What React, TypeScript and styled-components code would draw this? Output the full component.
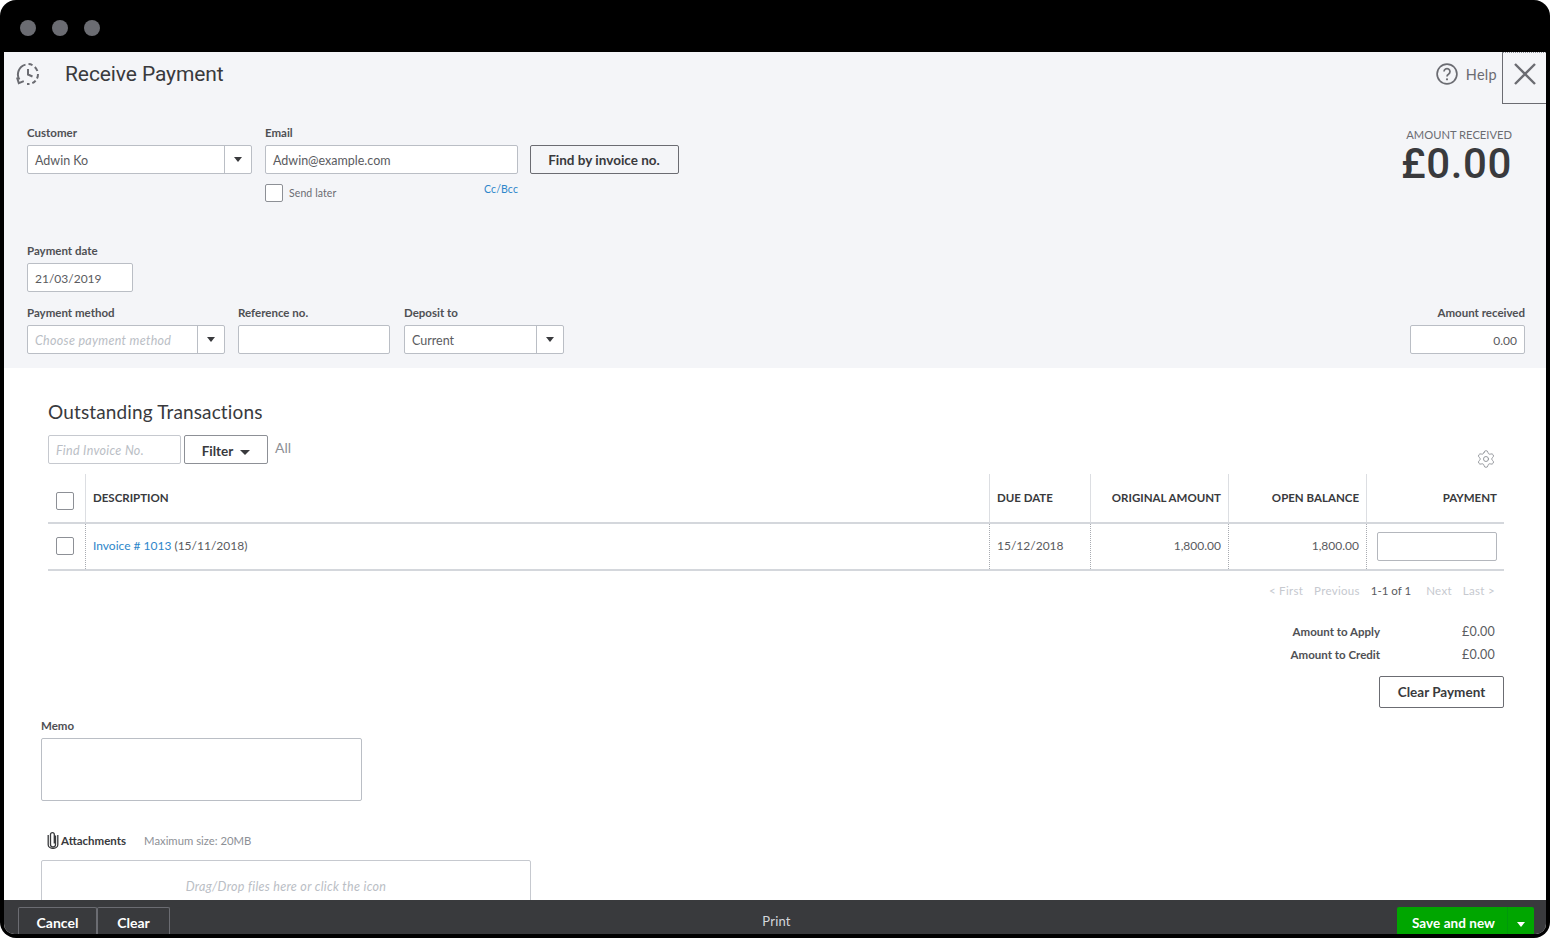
import React from "react";
import styled, { createGlobalStyle } from "styled-components";
import { Settings } from "lucide-react";

const Global = createGlobalStyle`
  html, body { margin: 0; padding: 0; background: #fff; }
  body { font-family: Lato, "Open Sans", sans-serif; color: #393a3d; }
  * { box-sizing: border-box; }
`;

const Frame = styled.div`
  width: 1550px; height: 938px; background: #000; border-radius: 16px;
  padding: 0 4px 4px; display: flex; flex-direction: column; overflow: hidden;
`;
const TitleBar = styled.div`
  height: 52px; flex: none; display: flex; align-items: center; gap: 16px;
  padding: 4px 0 0 16px;
`;
const Light = styled.span`
  width: 16px; height: 16px; border-radius: 50%; background: #6b6c72;
`;
const Window = styled.div`
  flex: 1; min-height: 0; display: flex; flex-direction: column; background: #fff; overflow: hidden;
  border-radius: 0 0 10px 10px;
`;
const Content = styled.div`flex: 1; min-height: 0; overflow: hidden;`;
const Panel = styled.div`height: 316px; background: #f4f5f8; display: flex; flex-direction: column;`;
const Head = styled.div`height: 52px; display: flex; align-items: flex-start; padding-left: 12px;`;
const HistIcon = styled.svg`width: 24px; height: 24px; margin-top: 10px; flex: none;`;
const Title = styled.h1`
  margin: 9px 0 0 25px; font: 400 21px/26px Roboto, sans-serif; letter-spacing: -0.1px; color: #393a3d;
`;
const HelpWrap = styled.div`
  margin-left: auto; display: flex; align-items: center; gap: 8px; height: 44px;
  color: #6b6c72; font-size: 14.5px; letter-spacing: 0.3px; padding-right: 5px;
`;
const CloseBtn = styled.div`
  width: 44px; height: 52px; border-left: 1px solid #6b6c72; border-bottom: 1px solid #6b6c72;
  border-top: 1px dotted #8d9096; display: flex; align-items: center; justify-content: center;
  padding-bottom: 8px; flex: none;
`;
const Form = styled.div`padding: 0 21px 0 23px; display: flex; flex-direction: column;`;
const TopRow = styled.div`display: flex; height: 138px; padding-top: 20px;`;
const Field = styled.div<{ $w: number; $ml?: number }>`
  width: ${p => p.$w}px; margin-left: ${p => p.$ml ?? 0}px; flex: none; display: flex; flex-direction: column;
`;
const Label = styled.label`
  font-size: 11.5px; line-height: 15px; font-weight: 700; color: #4f5054; height: 20px;
  white-space: nowrap; margin-top: 1px;
`;
const LabelRight = styled(Label)`text-align: right;`;
const Box = styled.div`
  height: 29px; background: #fff; border: 1px solid #babec5; border-radius: 2px; display: flex; align-items: center;
`;
const BoxText = styled.span<{ $ph?: boolean; $right?: boolean; $num?: boolean }>`
  flex: 1; padding: 1px 7px 0; white-space: nowrap;
  font-size: ${p => (p.$num ? "12px" : "12.5px")};
  letter-spacing: ${p => (p.$ph ? "0.3px" : "0")};
  color: ${p => (p.$ph ? "#babec5" : "#5a5b60")}; font-style: ${p => (p.$ph ? "italic" : "normal")};
  text-align: ${p => (p.$right ? "right" : "left")};
`;
const Caret = styled.span`
  width: 27px; align-self: stretch; flex: none; border-left: 1px solid #babec5;
  display: flex; align-items: center; justify-content: center;
  &::after { content: ""; border: 4px solid transparent; border-top: 5px solid #393a3d; border-bottom: 0; }
`;
const FindBtn = styled.button`
  width: 149px; height: 29px; margin: 21px 0 0 12px; background: #f4f5f8; border: 1px solid #6b6c72; border-radius: 2px;
  font: 700 13.5px Lato, sans-serif; color: #393a3d; padding: 0 1px 0 0;
`;
const SendRow = styled.div`display: flex; align-items: center; margin-top: 10px; height: 18px;`;
const Check = styled.span`
  width: 18px; height: 18px; background: #fff; border: 1px solid #8d9096; border-radius: 2px; flex: none; display: block;
`;
const SendLabel = styled.span`font-size: 10.5px; color: #6b6c72; margin-left: 6px; letter-spacing: 0.1px;`;
const CcBcc = styled.span`margin-left: auto; font-size: 10.5px; color: #2d86ca; letter-spacing: 0.1px; margin-top: -8px;`;
const Amount = styled.div`
  margin-left: auto; display: flex; flex-direction: column; align-items: flex-end; padding: 4px 13px 0 0;
`;
const AmountCap = styled.div`font-size: 11.2px; line-height: 14px; color: #6b6c72;`;
const AmountVal = styled.div`
  font: 500 42px/44px Roboto, sans-serif; letter-spacing: 0.6px; color: #393a3d;
`;
const DateField = styled(Field)`height: 62px;`;
const MethodRow = styled.div`display: flex; align-items: flex-start;`;
const Push = styled.div`margin-left: auto;`;

const Body = styled.div`padding: 32px 42px 0 44px;`;
const Sub = styled.h2`
  margin: 0; font-size: 19px; line-height: 24px; font-weight: 400; letter-spacing: 0.14px; color: #393a3d;
`;
const Tools = styled.div`display: flex; align-items: flex-start; height: 39px; margin-top: 11px;`;
const FindBox = styled(Box)`width: 133px; border-color: #c6c9cf;`;
const FilterBtn = styled.button`
  width: 84px; height: 29px; margin-left: 3px; background: #fff; border: 1px solid #8d9096; border-radius: 2px;
  font: 700 13.5px Lato, sans-serif; color: #393a3d; display: flex; align-items: center; justify-content: center; gap: 7px;
  padding: 3px 0 0;
  &::after { content: ""; border: 5px solid transparent; border-top: 5.5px solid #393a3d; border-bottom: 0; margin-top: 3px; }
`;
const AllText = styled.span`font-size: 14px; color: #8d9096; margin: 4px 0 0 7px;`;
const Gear = styled.div`margin: 14px 8px 0 auto; display: flex; color: #8d9096;`;

const Table = styled.div`width: 1456px;`;
const Row = styled.div<{ $h: number; $bw: number }>`
  display: grid; grid-template-columns: 37px 904px 101px 138px 138px 138px; height: ${p => p.$h}px;
  border-bottom: ${p => p.$bw}px solid #d4d7dc;
`;
const Cell = styled.div<{ $right?: boolean; $head?: boolean; $first?: boolean; $dotted?: boolean }>`
  display: flex; align-items: center; padding: 0 7px 2px; min-width: 0;
  justify-content: ${p => (p.$right ? "flex-end" : "flex-start")};
  border-left: ${p => (p.$first ? "none" : `1px ${p.$dotted ? "dotted #a8abb1" : "solid #dcdee2"}`)};
  font-size: ${p => (p.$head ? "11.5px" : "12px")};
  font-weight: ${p => (p.$head ? 700 : 400)};
  color: ${p => (p.$head ? "#393a3d" : "#5a5b60")};
  white-space: nowrap;
`;
const CheckCell = styled(Cell)`padding: 5px 0 0 8px;`;
const CheckCellBody = styled(Cell)`padding: 0 0 2px 8px;`;
const InvLink = styled.span`color: #2d86ca; margin-right: 3px;`;
const PayBox = styled(Box)`width: 120px; border-color: #b4b7bd; margin: 2px 0 0 3px;`;
const Pager = styled.div`
  display: flex; justify-content: flex-end; gap: 11px; padding: 12px 9px 0 0; font-size: 11.5px; line-height: 15px;
  letter-spacing: 0.3px; color: #c6c9cf;
`;
const PagerNow = styled.span`color: #5a5b60; margin: 0 4px 0 0; letter-spacing: 0;`;
const Totals = styled.div`
  margin-top: 26px; display: grid; grid-template-columns: auto 115px; justify-content: end;
  padding-right: 9px; row-gap: 7px;
`;
const TotalLabel = styled.div`font-size: 11.5px; line-height: 16px; font-weight: 700; color: #4f5054; text-align: right;`;
const TotalVal = styled.div`font-size: 12.5px; line-height: 16px; color: #5a5b60; text-align: right; letter-spacing: 0.2px;`;
const ClearWrap = styled.div`display: flex; justify-content: flex-end; margin-top: 13px;`;
const ClearBtn = styled.button`
  width: 125px; height: 32px; background: #fff; border: 1px solid #6b6c72; border-radius: 2px;
  font: 700 13.5px Lato, sans-serif; color: #393a3d; padding: 0;
`;
const MemoSection = styled.div`padding: 6px 0 0 37px;`;
const Memo = styled.div`
  width: 321px; height: 63px; margin-top: 5px; border: 1px solid #babec5; border-radius: 2px;
`;
const AttachRow = styled.div`display: flex; align-items: center; height: 20px; margin-top: 29px; padding-left: 6px;`;
const AttachLabel = styled.span`font-size: 11.5px; font-weight: 700; color: #393a3d; margin-left: 2px;`;
const AttachHint = styled.span`font-size: 11.3px; color: #8d9096; margin-left: 18px;`;
const Drop = styled.div`
  width: 490px; height: 60px; margin-top: 10px; border: 1px solid #c6c9cf; border-radius: 2px 2px 0 0;
  text-align: center; padding-top: 18px; font-size: 12.5px; font-style: italic; color: #babec5; letter-spacing: 0.3px;
`;

const Footer = styled.div`
  height: 34px; flex: none; background: #393a3d; display: flex; align-items: flex-start; padding: 7px 12px 0 14px; position: relative;
`;
const GhostBtn = styled.div<{ $w: number }>`
  width: ${p => p.$w}px; height: 27px; border: 1px solid #6b6c72; border-bottom: 0; border-radius: 2px 2px 0 0;
  color: #fff; font-size: 14px; font-weight: 700; display: flex; align-items: center; justify-content: center; padding-top: 3px;
`;
const Print = styled.div`
  flex: 1; text-align: center; color: #d4d7dc; font-size: 13px; letter-spacing: 0.2px; line-height: 28px; padding-right: 14px;
`;
const Save = styled.div`
  width: 137px; height: 27px; background: #00a600; border-radius: 2px 2px 0 0; display: flex; color: #fff; font-size: 13.5px; font-weight: 700;
`;
const SaveMain = styled.div`
  width: 111px; text-align: center; padding: 7px 0 0 3px; line-height: 18px; letter-spacing: 0.05px; border-right: 1px solid #00990a;
`;
const SaveCaret = styled.div`
  flex: 1; display: flex; align-items: center; justify-content: center; padding-top: 8px;
  &::after { content: ""; border: 4px solid transparent; border-top: 5px solid #fff; border-bottom: 0; }
`;

export default function App() {
  return (
    <>
      <Global />
      <Frame>
        <TitleBar><Light /><Light /><Light /></TitleBar>
        <Window>
          <Content>
            <Panel>
              <Head>
                <HistIcon viewBox="0 0 24 24" fill="none" stroke="#6b6c72" strokeWidth="2">
                  <path d="M3.4 17.5A10 10 0 0 1 9.5 2.6" />
                  <path d="M12.5 2.1a10 10 0 0 1 4 1" />
                  <path d="M18.8 5a10 10 0 0 1 2.6 4M22 12a10 10 0 0 1-1 4.5M19.6 18.6a10 10 0 0 1-3.3 2.6M13.5 22l-2.5.1" />
                  <path d="M12 7v5.5l4.5 2" strokeWidth="2" />
                  <path d="M1 15.5l1.8 5.6 5-2" strokeWidth="2" />
                </HistIcon>
                <Title>Receive Payment</Title>
                <HelpWrap>
                  <svg width="22" height="22" viewBox="0 0 22 22" fill="none">
                    <circle cx="11" cy="11" r="9.9" stroke="#6b6c72" strokeWidth="1.7" />
                    <path d="M8 8.6a3 3 0 1 1 4.5 2.6c-1 .6-1.5 1-1.5 2.3" stroke="#6b6c72" strokeWidth="1.7" />
                    <circle cx="11" cy="16.3" r="1.1" fill="#6b6c72" />
                  </svg>
                  Help
                </HelpWrap>
                <CloseBtn>
                  <svg width="22" height="22" viewBox="0 0 22 22" stroke="#6b6c72" strokeWidth="2.4">
                    <path d="M1 1l20 20M21 1L1 21" />
                  </svg>
                </CloseBtn>
              </Head>
              <Form>
                <TopRow>
                  <Field $w={225}>
                    <Label>Customer</Label>
                    <Box><BoxText>Adwin Ko</BoxText><Caret /></Box>
                  </Field>
                  <Field $w={253} $ml={13}>
                    <Label>Email</Label>
                    <Box><BoxText>Adwin@example.com</BoxText></Box>
                    <SendRow>
                      <Check />
                      <SendLabel>Send later</SendLabel>
                      <CcBcc>Cc/Bcc</CcBcc>
                    </SendRow>
                  </Field>
                  <FindBtn>Find by invoice no.</FindBtn>
                  <Amount>
                    <AmountCap>AMOUNT RECEIVED</AmountCap>
                    <AmountVal>£0.00</AmountVal>
                  </Amount>
                </TopRow>
                <DateField $w={106}>
                  <Label>Payment date</Label>
                  <Box><BoxText $num>21/03/2019</BoxText></Box>
                </DateField>
                <MethodRow>
                  <Field $w={198}>
                    <Label>Payment method</Label>
                    <Box><BoxText $ph>Choose payment method</BoxText><Caret /></Box>
                  </Field>
                  <Field $w={152} $ml={13}>
                    <Label>Reference no.</Label>
                    <Box />
                  </Field>
                  <Field $w={160} $ml={14}>
                    <Label>Deposit to</Label>
                    <Box><BoxText>Current</BoxText><Caret /></Box>
                  </Field>
                  <Push>
                    <Field $w={115}>
                      <LabelRight>Amount received</LabelRight>
                      <Box><BoxText $right $num>0.00</BoxText></Box>
                    </Field>
                  </Push>
                </MethodRow>
              </Form>
            </Panel>
            <Body>
              <Sub>Outstanding Transactions</Sub>
              <Tools>
                <FindBox><BoxText $ph>Find Invoice No.</BoxText></FindBox>
                <FilterBtn>Filter</FilterBtn>
                <AllText>All</AllText>
                <Gear><Settings size={20} strokeWidth={1.1} /></Gear>
              </Tools>
              <Table>
                <Row $h={50} $bw={2}>
                  <CheckCell $first $head><Check /></CheckCell>
                  <Cell $head>DESCRIPTION</Cell>
                  <Cell $head>DUE DATE</Cell>
                  <Cell $head $right>ORIGINAL AMOUNT</Cell>
                  <Cell $head $right>OPEN BALANCE</Cell>
                  <Cell $head $right>PAYMENT</Cell>
                </Row>
                <Row $h={47} $bw={2}>
                  <CheckCellBody $first><Check /></CheckCellBody>
                  <Cell $dotted><InvLink>Invoice # 1013</InvLink>(15/11/2018)</Cell>
                  <Cell $dotted>15/12/2018</Cell>
                  <Cell $dotted $right>1,800.00</Cell>
                  <Cell $dotted $right>1,800.00</Cell>
                  <Cell $dotted $right><PayBox /></Cell>
                </Row>
              </Table>
              <Pager>
                <span>&lt; First</span>
                <span>Previous</span>
                <PagerNow>1-1 of 1</PagerNow>
                <span>Next</span>
                <span>Last &gt;</span>
              </Pager>
              <Totals>
                <TotalLabel>Amount to Apply</TotalLabel><TotalVal>£0.00</TotalVal>
                <TotalLabel>Amount to Credit</TotalLabel><TotalVal>£0.00</TotalVal>
              </Totals>
              <ClearWrap><ClearBtn>Clear Payment</ClearBtn></ClearWrap>
            </Body>
            <MemoSection>
              <Label>Memo</Label>
              <Memo />
              <AttachRow>
                <svg width="12" height="18" viewBox="0 0 12 18" fill="none" stroke="#393a3d" strokeWidth="1.3">
                  <path d="M8.5 4.5v9a2.5 2.5 0 0 1-5 0V3.5a1.9 1.9 0 0 1 3.8 0v9" />
                  <path d="M1.2 4v9.8a4.8 3.6 0 0 0 9.6 0V4" />
                </svg>
                <AttachLabel>Attachments</AttachLabel>
                <AttachHint>Maximum size: 20MB</AttachHint>
              </AttachRow>
              <Drop>Drag/Drop files here or click the icon</Drop>
            </MemoSection>
          </Content>
          <Footer>
            <GhostBtn $w={79}>Cancel</GhostBtn>
            <GhostBtn $w={73}>Clear</GhostBtn>
            <Print>Print</Print>
            <Save><SaveMain>Save and new</SaveMain><SaveCaret /></Save>
          </Footer>
        </Window>
      </Frame>
    </>
  );
}
